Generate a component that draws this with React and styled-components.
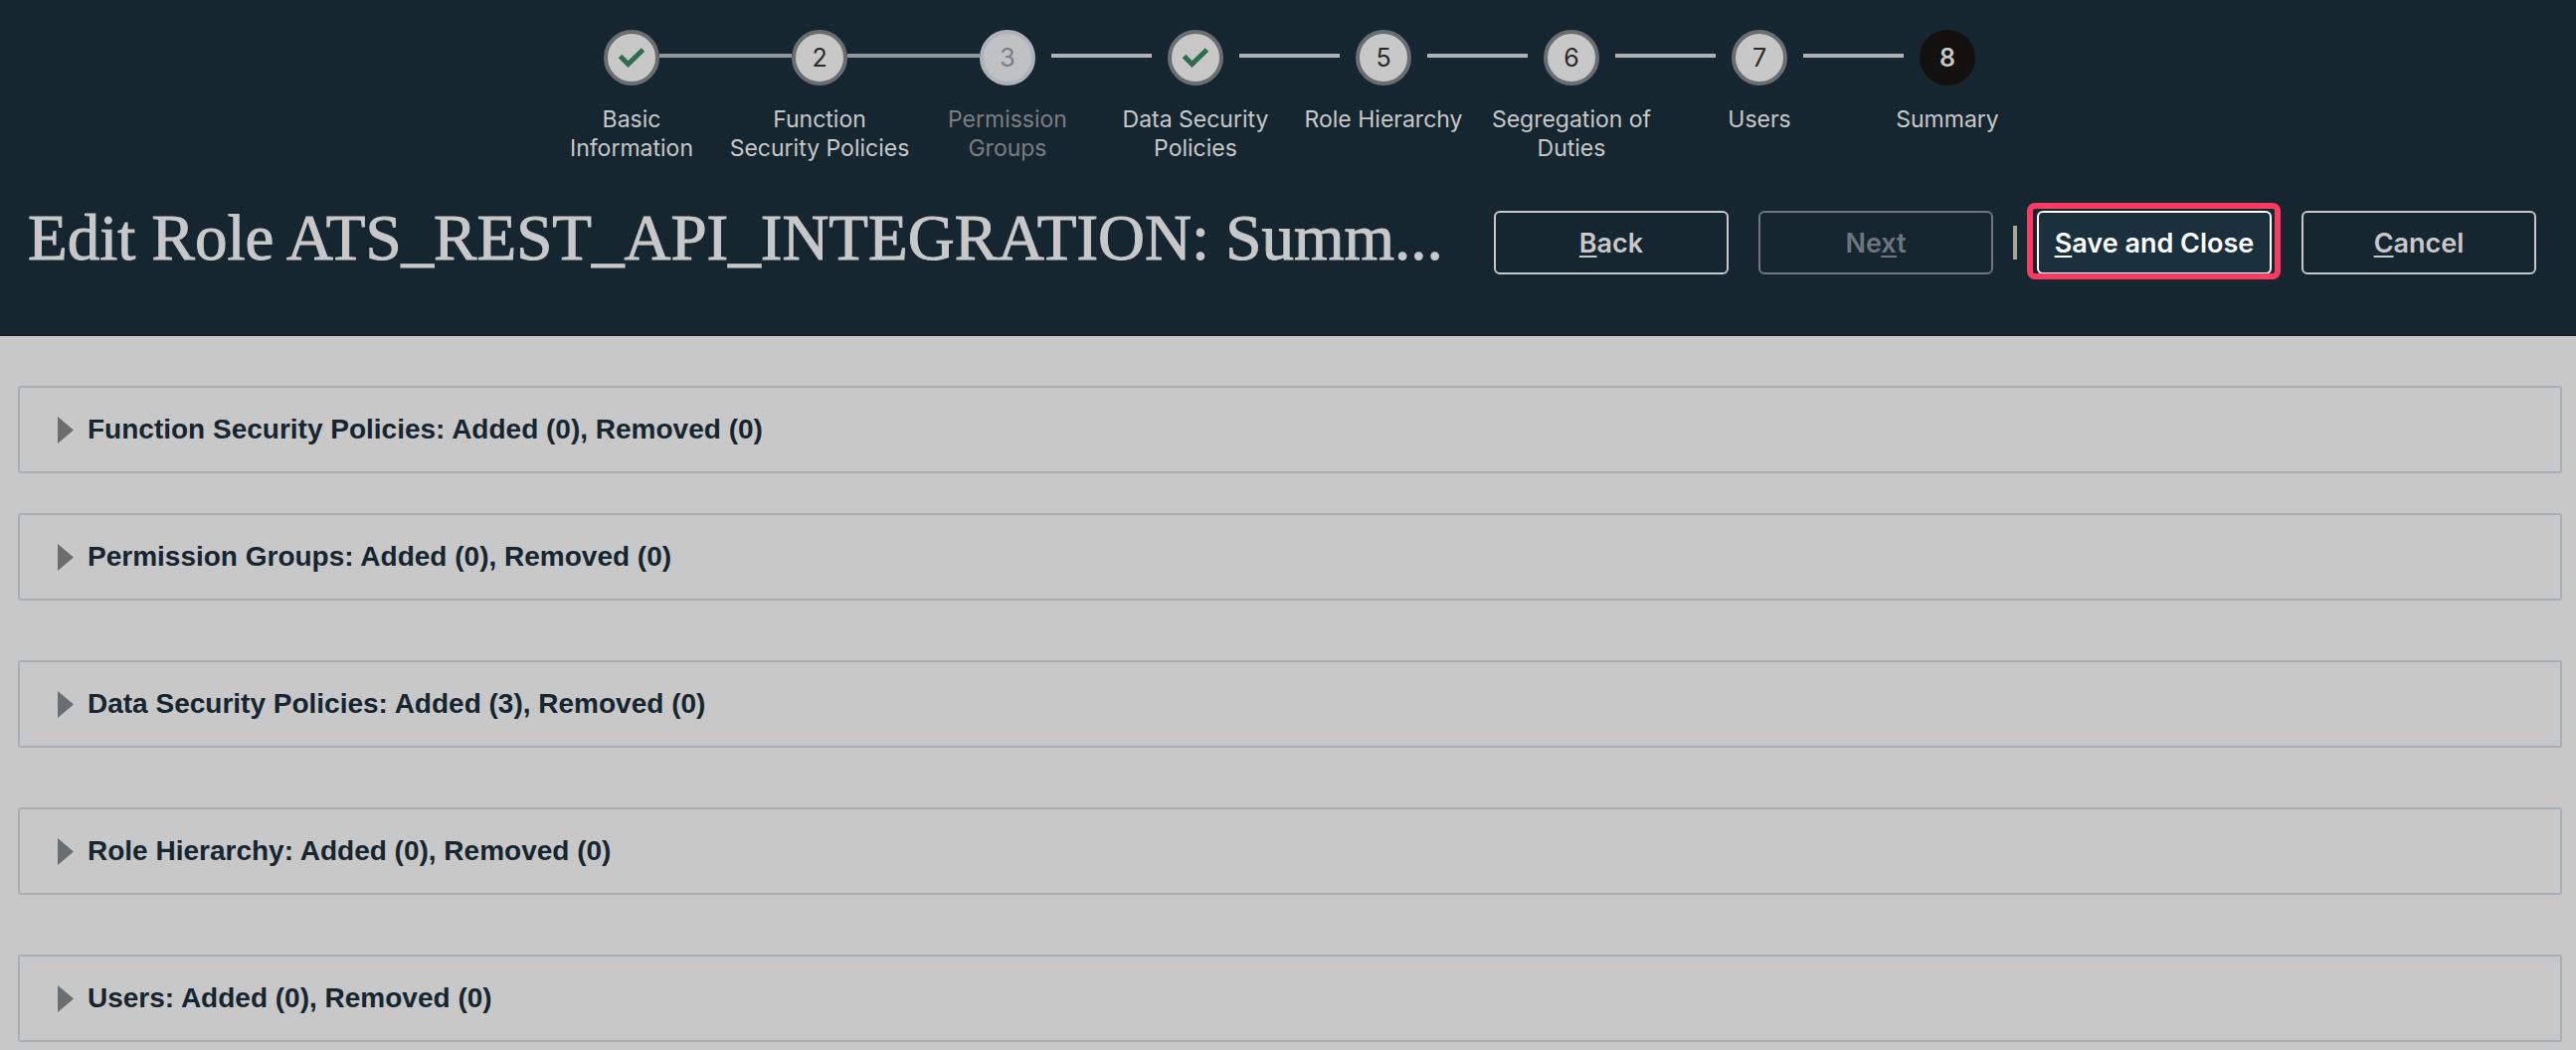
import React from 'react';
import styled, { createGlobalStyle } from 'styled-components';

const GlobalStyle = createGlobalStyle`
    * {
        box-sizing: border-box;
    }
    body {
        margin: 0;
        background-color: #c8c8c8;
        font-family: Inter, "Liberation Sans", sans-serif;
    }
`;

const Header = styled.header`
    padding: 30px 40px 60px 28px;
    background-color: #152631;
    border-bottom: 2px solid #10202b;
`;

const Train = styled.ol`
    display: flex;
    justify-content: center;
    margin: 0;
    padding: 0 0 0 15px;
    list-style: none;
`;

const Step = styled.li`
    display: flex;
    flex-direction: column;
    align-items: center;
    width: 189px;
`;

const StepTop = styled.div`
    display: flex;
    align-items: center;
    justify-content: center;
    width: 100%;
`;

const Connector = styled.span`
    width: calc(50% - 28px);
    height: 4px;
    margin-bottom: 4px;
    padding-left: ${props => (props.$side === "right" && props.$gap ? "16px" : "0")};
    padding-right: ${props => (props.$side === "left" && props.$gap ? "16px" : "0")};
    background-color: ${props => props.$color || "transparent"};
    background-clip: content-box;
`;

const Circle = styled.button`
    display: flex;
    flex-shrink: 0;
    align-items: center;
    justify-content: center;
    width: 56px;
    height: 56px;
    padding: 0;
    border: 4px solid ${props => circleColors[props.$state].border};
    border-radius: 50%;
    background-color: ${props => circleColors[props.$state].fill};
    color: ${props => circleColors[props.$state].text};
    font-family: inherit;
    font-size: 25px;
    font-weight: ${props => (props.$state === "current" ? 600 : 400)};
`;

const StepLabel = styled.span`
    margin-top: 20px;
    color: ${props => (props.$disabled ? "#7c7d7f" : "#c8c8c8")};
    font-size: 23px;
    line-height: 29px;
    text-align: center;
    white-space: pre;
`;

const TitleRow = styled.div`
    display: flex;
    align-items: flex-start;
    justify-content: space-between;
    margin-top: 39px;
`;

const Title = styled.h1`
    margin: 0;
    color: #c8c8c8;
    font-family: "Liberation Serif", serif;
    font-size: 65px;
    font-weight: 400;
    line-height: 72px;
    white-space: nowrap;
    -webkit-text-stroke: 1px #c8c8c8;
`;

const Actions = styled.div`
    display: flex;
    align-items: center;
    gap: 20px;
    padding-top: 9px;
`;

const ActionGroup = styled.div`
    display: flex;
    align-items: center;
    gap: 30px;
`;

const Separator = styled.span`
    width: 4px;
    height: 34px;
    background-color: #a8a698;
`;

const ActionButton = styled.button`
    width: 236px;
    height: 64px;
    padding: 0;
    border: 2px solid #c8c8c8;
    border-radius: 6px;
    background-color: transparent;
    color: #c8c8c8;
    font-family: inherit;
    font-size: 27px;
    font-weight: 600;
    white-space: nowrap;

    &:disabled {
        border-color: #6f757d;
        color: #6f757d;
    }
`;

const HighlightedButton = styled(ActionButton)`
    position: relative;
    border-color: #ffffff;
    background-color: #1b303d;
    color: #ffffff;

    &::after {
        content: "";
        position: absolute;
        inset: -10px -11px -7px -12px;
        border: 6px solid #fb3a62;
        border-radius: 8px;
    }
`;

const AccessKey = styled.span`
    text-decoration: underline;
    text-decoration-thickness: 2px;
    text-underline-offset: 3px;
    text-decoration-skip-ink: none;
`;

const Main = styled.main`
    display: flex;
    flex-direction: column;
    gap: 60px;
    padding: 50px 14px 8px 18px;
`;

const PanelGroup = styled.div`
    display: flex;
    flex-direction: column;
    gap: 40px;
`;

const PanelBox = styled.section`
    border: 2px solid #a8afb4;
    border-radius: 3px;
`;

const PanelToggle = styled.button`
    display: flex;
    align-items: center;
    gap: 14px;
    width: 100%;
    height: 84px;
    padding: 0 38px;
    border: none;
    background: none;
    color: #152631;
    font-family: "Liberation Sans", sans-serif;
    font-size: 28px;
    font-weight: 700;
    text-align: left;
`;

const circleColors = {
  normal: { border: "#6b6e70", fill: "#c8c8c8", text: "#2a2a2a" },
  disabled: { border: "#aeb2b9", fill: "#bfc1c3", text: "#7c7d7f" },
  current: { border: "#12110f", fill: "#12110f", text: "#c8c8c8" },
};

const DONE_LINE = "#8f979d";
const OPEN_LINE = "#b1b4b6";

const steps = [
  { label: "Basic\nInformation", state: "normal", done: true },
  { label: "Function\nSecurity Policies", state: "normal", before: DONE_LINE },
  { label: "Permission\nGroups", state: "disabled", before: DONE_LINE },
  { label: "Data Security\nPolicies", state: "normal", before: OPEN_LINE, done: true },
  { label: "Role Hierarchy", state: "normal", before: OPEN_LINE },
  { label: "Segregation of\nDuties", state: "normal", before: OPEN_LINE },
  { label: "Users", state: "normal", before: OPEN_LINE },
  { label: "Summary", state: "current", before: OPEN_LINE },
];

const CheckIcon = () => (
  <svg width="28" height="22" viewBox="0 0 28 22" aria-hidden="true">
    <path d="M2.5 9.5 L10.5 17.5 L25.5 3" fill="none" stroke="#2f6b4d" strokeWidth="5" />
  </svg>
);

const Arrow = () => (
  <svg width="16" height="27" viewBox="0 0 16 27" aria-hidden="true">
    <path d="M0 0 L16 13.5 L0 27 Z" fill="#6b6e70" />
  </svg>
);

const TrainStep = ({ step, number, after }) => (
  <Step>
    <StepTop>
      <Connector $side="left" $color={step.before} $gap={step.before === OPEN_LINE} />
      <Circle
        type="button"
        $state={step.state}
        disabled={step.state === "disabled"}
        aria-label={step.label}
        aria-current={step.state === "current" ? "step" : undefined}
      >
        {step.done ? <CheckIcon /> : number}
      </Circle>
      <Connector $side="right" $color={after} $gap={after === OPEN_LINE} />
    </StepTop>
    <StepLabel $disabled={step.state === "disabled"}>{step.label}</StepLabel>
  </Step>
);

const Panel = ({ title }) => (
  <PanelBox>
    <PanelToggle type="button" aria-expanded="false">
      <Arrow />
      {title}
    </PanelToggle>
  </PanelBox>
);

const App = () => (
  <>
    <GlobalStyle />
    <Header>
      <Train>
        {steps.map((step, i) => (
          <TrainStep
            key={step.label}
            step={step}
            number={i + 1}
            after={steps[i + 1] && steps[i + 1].before}
          />
        ))}
      </Train>
      <TitleRow>
        <Title>Edit Role ATS_REST_API_INTEGRATION: Summ...</Title>
        <Actions>
          <ActionGroup>
            <ActionButton type="button"><AccessKey>B</AccessKey>ack</ActionButton>
            <ActionButton type="button" disabled>Ne<AccessKey>x</AccessKey>t</ActionButton>
          </ActionGroup>
          <Separator />
          <ActionGroup>
            <HighlightedButton type="button"><AccessKey>S</AccessKey>ave and Close</HighlightedButton>
            <ActionButton type="button"><AccessKey>C</AccessKey>ancel</ActionButton>
          </ActionGroup>
        </Actions>
      </TitleRow>
    </Header>
    <Main>
      <PanelGroup>
        <Panel title="Function Security Policies: Added (0), Removed (0)" />
        <Panel title="Permission Groups: Added (0), Removed (0)" />
      </PanelGroup>
      <Panel title="Data Security Policies: Added (3), Removed (0)" />
      <Panel title="Role Hierarchy: Added (0), Removed (0)" />
      <Panel title="Users: Added (0), Removed (0)" />
    </Main>
  </>
);

export default App;
